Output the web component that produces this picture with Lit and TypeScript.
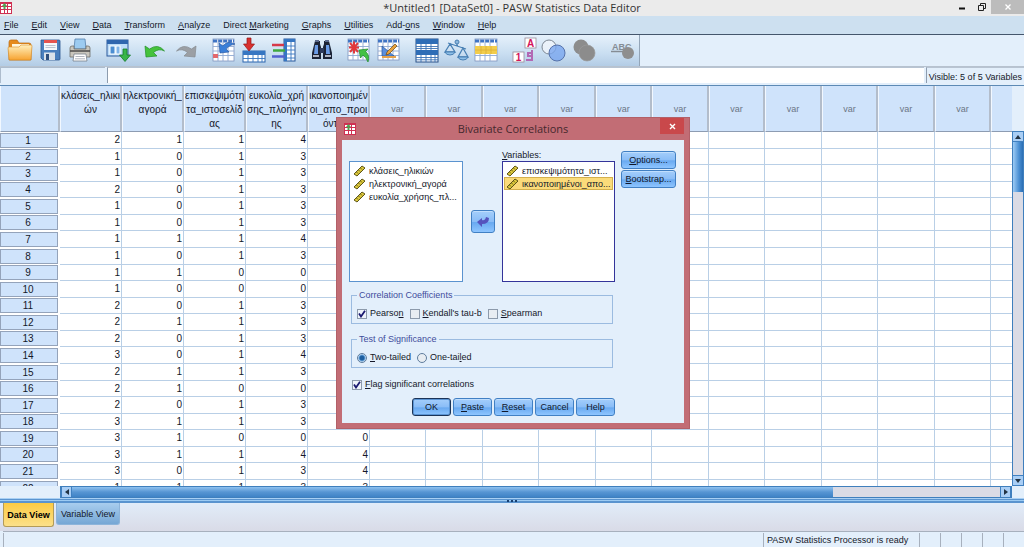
import { LitElement, html, svg, css, nothing } from "lit";
import { customElement, property } from "lit/decorators.js";
import { classMap } from "lit/directives/class-map.js";

// A label whose mnemonic letter is marked with "&".
const mnemonic = (label: string) => {
  const at = label.indexOf("&");
  return at < 0
    ? html`${label}`
    : html`${label.slice(0, at)}<u>${label[at + 1]}</u>${label.slice(at + 2)}`;
};

const MENUS = ["&File", "&Edit", "&View", "&Data", "&Transform", "&Analyze", "Direct &Marketing",
  "&Graphs", "&Utilities", "Add-&ons", "&Window", "&Help"];

const VARIABLES = [
  ["κλάσεις_ηλικι", "ών"],
  ["ηλεκτρονική_", "αγορά"],
  ["επισκεψιμότη", "τα_ιστοσελίδ", "ας"],
  ["ευκολία_χρή", "σης_πλοήγησ", "ης"],
  ["ικανοποιημέν", "οι_απο_προι", "όντα_υ"],
];

const ROWS = [
  "2114", "1013", "1013", "2013", "1013", "1013", "1114", "1013", "1100", "1000", "2013",
  "2113", "2013", "3014", "2113", "2100", "2013", "3113", "31000", "31144", "30134", "11133",
];
const EMPTY_COLUMNS = Array.from({ length: 11 });

const grid = (x: number, y: number, w: number, h: number, head = "#3f74c4") => svg`
  <rect x=${x} y=${y} width=${w} height=${h} fill="#fff" stroke="#7f95bd" stroke-width=".8"/>
  <path d="M${x} ${y + 2}h${w}" stroke=${head} stroke-width="3" stroke-dasharray="4 1"/>
  <path d="M${x} ${y + 7.5}h${w}M${x} ${y + 12}h${w}M${x} ${y + 16.5}h${w}M${x + 5} ${y}v${h}M${x + 10} ${y}v${h}M${x + 15} ${y}v${h}" stroke="#8fa9d3" stroke-width=".9"/>`;

const ICONS: Record<string, unknown> = {
  open: svg`
    <path d="M4 25V7q0-2 2-2h6l2 3h10q2 0 2 2v15z" fill="#e58a1d" stroke="#b96a12" stroke-width=".7"/>
    <path d="M7 9h17v5H7z" fill="#fff6dd"/>
    <path d="M3 13q0-1 1-1h10l2-2h10q1 0 1 1l-1 13q0 1-1 1H5q-1 0-1-1z" fill="url(#gold)" stroke="#d78a22" stroke-width=".6"/>`,
  save: svg`
    <path d="M6 5h18q1 0 1 1v18q0 1-1 1H8l-2-2z" fill="#4a7fbd" stroke="#2c568f" stroke-width=".8"/>
    <path d="M9 5h13v10H9z" fill="#f4f6fa"/><path d="M9 5h13v3H9z" fill="#e5534f"/>
    <path d="M10.500 10.500h10M10.500 12.500h10" stroke="#aab5c5" stroke-width=".8"/>
    <path d="M9 17.500h11V25H9z" fill="#dbe2ea"/><path d="M11 19h3v6h-3z" fill="#2f4f7d"/>`,
  print: svg`
    <path d="M10 4h10l1 10H9z" fill="#9ccbf0" stroke="#5580ad" stroke-width=".8"/>
    <path d="M5 13q0-2 2-2h2v3h12v-3h2q2 0 2 2v9H5z" fill="#c9c6bd" stroke="#6e6e6a" stroke-width=".8"/>
    <path d="M5 16h20" stroke="#4b4b4b" stroke-width="1.500"/>
    <path d="M9 19h12l1 7H8z" fill="#fff" stroke="#77808c" stroke-width=".8"/>
    <path d="M10.500 21.500h9M10 23.800h10" stroke="#9aa2ad" stroke-width=".8"/>`,
  recall: svg`
    <rect x="4" y="5" width="21" height="16" fill="#bcdcf8" stroke="#2d5a9c"/>
    <path d="M4 5h21v4H4z" fill="#2f66ae"/>
    <rect x="7" y="11" width="5" height="8" fill="#4b8ed2" stroke="#fff"/>
    <rect x="13" y="11" width="4" height="8" fill="#7fb4e8" stroke="#fff"/>
    <path d="M20 14h4v6h3.500L22 26.500 16.500 20H20z" fill="#39b54a" stroke="#14792a" stroke-width=".8"/>`,
  undo: svg`<path d="M4 11l1 11 11-1-3.500-3.500q5-4.500 11-1.500Q17 8 8.500 14z" fill="#45c23c" stroke="#1f8f24" stroke-width=".7"/>`,
  redo: svg`<path d="M25 11l-1 11-11-1 3.500-3.500q-5-4.500-11-1.500Q12 8 20.500 14z" fill="#9b9fa4" stroke="#85898e" stroke-width=".7"/>`,
  gotoCase: svg`${grid(4, 4, 21, 22)}
    <path d="M4 19h5v4H4z" fill="#e2686c"/>
    <path d="M10 8l1 10 9-1-3-3q3-4 9-5-8-4-12 2z" fill="#3a7fd8" stroke="#1d4e9a" stroke-width=".6"/>`,
  gotoVariable: svg`
    <rect x="4" y="16" width="22" height="11" fill="#fff" stroke="#2a64ae"/>
    <path d="M4 16h22v4H4z" fill="#3676c2"/>
    <path d="M4 23.500h22M9 20v7M14 20v7M19 20v7M23 20v7" stroke="#3676c2" stroke-width=".9"/>
    <path d="M8 3h4v6h3.500l-5.500 7-5.500-7H8z" fill="#d8312f" stroke="#941918" stroke-width=".7"/>`,
  variables: svg`
    <rect x="15" y="4" width="11" height="22" fill="#fff" stroke="#28599c"/>
    <path d="M15 4h3v22h-3zM15 4h11v3H15z" fill="#3676c2"/>
    <path d="M18 11h8M18 15h8M18 19h8M18 23h8M22 7v19" stroke="#3676c2" stroke-width=".9"/>
    <path d="M3 10h12" stroke="#d63a4a" stroke-width="2.500"/><path d="M4 15.500h12" stroke="#3fa83f" stroke-width="2.500"/>
    <path d="M3 21.500h13" stroke="#5361cf" stroke-width="2.500"/>`,
  find: svg`
    <path d="M8 6h5v3l1 3v12H5v-6l2-8zM17 6h5l1 4 2 8v6h-9V12l1-3z" fill="#1b2336"/>
    <path d="M8 5h4v2H8zM18 5h4v2h-4z" fill="#5b6a8c"/><path d="M8 10h3v9H7zM19 10h3l1 9h-4z" fill="#6a9be6"/>
    <path d="M13 13h4v5h-4z" fill="#2c3a5c"/><path d="M6 21h6M18 21h6" stroke="#dfe5f2" stroke-width="1.500"/>`,
  insertCase: svg`${grid(3, 4, 21, 21)}
    <path d="M5 8l8 9M13 8l-8 9M9 6.500v12M4 12.500h10" stroke="#e0383c" stroke-width="2"/>
    <path d="M14 15l9-1-2.500 2.500Q25 20 23 27q-2-5-5-7l-2.500 3z" fill="#43c144" stroke="#1e8a2a" stroke-width=".7"/>`,
  insertVariable: svg`${grid(3, 4, 21, 21)}
    <path d="M7 11v10h12z" fill="#5b8fdc" stroke="#26549c" stroke-width=".7"/>
    <path d="M20 9l2 2-8 8-3 1 1-3z" fill="#e9a23c" stroke="#6d4813" stroke-width=".7"/><path d="M7 21h14v2H7z" fill="#e5a14b"/>`,
  split: svg`
    <rect x="3" y="4" width="22" height="23" fill="#fff" stroke="#274f86"/>
    <path d="M3 4h22v5H3zM3 15h22v5H3z" fill="#2e6db6"/>
    <path d="M3 11.500h22M3 13.500h22M3 22.500h22M3 24.800h22M8 9v6M13 9v6M18 9v6M8 20v7M13 20v7M18 20v7M22 20v7" stroke="#3b73b5" stroke-width=".9"/>`,
  weight: svg`<g fill="none" stroke="#4980b4" stroke-width="1.300">
    <path d="M5 8l18 6M14 5v6M7 9l-5 8h10zM20 13l-5 9h10z"/></g>
    <circle cx="14" cy="7" r="2" fill="#8bb7dd" stroke="#4980b4"/>
    <path d="M2 17h10q-1 3-5 3t-5-3zM15 22h10q-1 3-5 3t-5-3z" fill="#8fc0e8" stroke="#4980b4"/>`,
  select: svg`${grid(2, 4, 22, 22)}<path d="M2 11h22v8H2z" fill="#f2cd4c"/>
    <path d="M2 15h22M8 11v8M13 11v8M18 11v8" stroke="#dcae35" stroke-width=".8"/>`,
  valueLabels: svg`
    <rect x="14" y="3" width="11" height="10" fill="#fff" stroke="#9a8c9a" stroke-width=".8"/>
    <rect x="2" y="17" width="11" height="10" fill="#fff" stroke="#9a8c9a" stroke-width=".8"/>
    <text x="19.500" y="11.500" text-anchor="middle" font-size="10" font-weight="700" fill="#d3145a">A</text>
    <text x="7.500" y="25.500" text-anchor="middle" font-size="10" font-weight="700" fill="#d3145a">1</text>
    <path d="M21 15v11M22 18h-5v3h4M15 25h7" fill="none" stroke="#b268b4" stroke-width="2"/>`,
  sets: svg`<circle cx="8" cy="12" r="7" fill="#f0f5fb" fill-opacity=".8" stroke="#7e8894"/>
    <circle cx="16" cy="18" r="8" fill="#79a6ef" fill-opacity=".8" stroke="#5672ab"/>`,
  allVariables: svg`<circle cx="10" cy="12" r="7.500" fill="#8c8c8c"/><circle cx="16" cy="18" r="8" fill="#8c8c8c" stroke="#9b9b9b" stroke-width=".7"/>`,
  spelling: svg`
    <text x="3" y="14.500" font-size="9" font-weight="700" fill="#858c94">ABC</text>
    <path d="M2 16.500h17" stroke="#858c94" stroke-width="1.500"/><circle cx="19" cy="18" r="6" fill="#8e8e8e"/>`,
};

const TOOL_GROUPS: [string, string][][] = [
  [["open", "Open"], ["save", "Save"], ["print", "Print"]],
  [["recall", "Recall dialogs"]],
  [["undo", "Undo"], ["redo", "Redo"]],
  [["gotoCase", "Go to case"], ["gotoVariable", "Go to variable"], ["variables", "Variables"]],
  [["find", "Find"]],
  [["insertCase", "Insert case"], ["insertVariable", "Insert variable"]],
  [["split", "Split file"], ["weight", "Weight cases"], ["select", "Select cases"]],
  [["valueLabels", "Value labels"], ["sets", "Use sets"], ["allVariables", "Show all"]],
  [["spelling", "Spell check"]],
];

const appIcon = html`<svg class="app-icon" viewBox="0 0 12 12" aria-hidden="true">
  <rect width="12" height="12" fill="#cf3052"/>
  <path d="M1 2h3v2H1zM5 2h2v2H5zM8 2h3v2H8zM1 5h3v2H1zM5 5h2v2H5zM8 5h3v2H8zM1 8h3v3H1zM5 8h2v3H5zM8 8h3v3H8z" fill="#fff"/>
  <path d="M4.500 1l2.500 3H5.500v3h-2V4H2z" fill="#4fa352"/></svg>`;

const base = css`
  * { box-sizing: border-box; }
  button, input, fieldset, legend { font: inherit; color: inherit; margin: 0; padding: 0; border: 0; background: none; }
  u { text-decoration: underline; text-underline-offset: 1px; }
  svg { display: block; }
  .app-icon { width: 12px; height: 12px; flex: none; }
`;

@customElement("scale-list")
export class ScaleList extends LitElement {
  @property({ attribute: false }) items: string[] = [];
  @property({ type: Number }) selected = -1;

  static styles = [base, css`
    :host { display: block; background: #fff; border: 1px solid #5b93cf; padding: 2px 1px; overflow: hidden; }
    :host([active]) { border-color: #34349a; }
    ul { list-style: none; margin: 0; padding: 0; }
    li { display: flex; align-items: center; gap: 3px; height: 13px; padding-left: 1px; border: 1px solid transparent; white-space: nowrap; }
    li.selected { background: #fbdb7a; border-color: #d3b04e; }
    svg { width: 13px; height: 12px; flex: none; }
  `];

  render() {
    return html`<ul>${this.items.map((item, i) => html`
      <li class=${classMap({ selected: i === this.selected })}>
        <svg viewBox="0 0 13 12" aria-hidden="true">
          <path d="M1 9l8-8 3 2-8 8z" fill="#ddc93c" stroke="#5e5618" stroke-width="1"/>
          <path d="M3.500 7l1.500 1.500M5.500 5l1.500 1.500M7.500 3L9 4.500" stroke="#5e5618" stroke-width=".9"/>
        </svg><span>${item}</span>
      </li>`)}</ul>`;
  }
}

@customElement("correlations-dialog")
export class CorrelationsDialog extends LitElement {
  static styles = [base, css`
    :host { display: block; background: #c26d75; border: 1px solid #b26068; padding: 0 5px 5px; }
    header { display: grid; grid-template-columns: 28px 1fr 28px; align-items: center; height: 22px; font: 11px/22px "Open Sans", sans-serif; color: #45282d; text-align: center; }
    header .app-icon { margin-left: 2px; }
    h2 { font: inherit; margin: 0; }
    .close { align-self: start; justify-self: end; width: 24px; height: 16px; background: #c9484b; color: #fff; display: grid; place-items: center; }
    .close svg { width: 7px; height: 7px; }
    .panel { display: grid; grid-template-columns: 266px 55px; gap: 6px; padding: 9px 7px 7px; background: #e3effb; }
    .picker { display: grid; grid-template-columns: 114px 1fr 113px; grid-template-rows: 12px 121px; }
    .picker label { grid-column: 3; line-height: 12px; }
    .picker scale-list { grid-row: 2; }
    .move { grid-row: 2; place-self: center; width: 24px; height: 23px; display: grid; place-items: center; }
    .move svg { width: 12px; height: 10px; }
    .side { display: flex; flex-direction: column; gap: 1px; padding-top: 2px; }
    .push { border: 1px solid #4180c4; border-radius: 3px; background: linear-gradient(#a4cefb, #8abdf7 50%, #69a9f0 55%, #8ec5ff); box-shadow: inset 0 1px #c0defd; color: #10182c; }
    .side .push { height: 18px; }
    fieldset { display: flex; align-items: center; gap: 6px; border: 1px solid #9bbbe0; margin-left: 2px; margin-right: 2px; padding: 6px 5px 3px; min-width: 0; }
    legend { padding: 0 2px; line-height: 12px; color: #3f4c9c; }
    .coefficients { margin-top: 7px; }
    .tails { margin-top: 9px; }
    .choice { display: flex; align-items: center; gap: 3px; line-height: 13px; height: 13px; white-space: nowrap; }
    .flag { margin: 10px 0 0 3px; }
    input { appearance: none; flex: none; width: 10px; height: 10px; border: 1px solid #8c9aab; background-color: #e8edf2; }
    input[type="checkbox"]:checked { background: #eef3fa url('data:image/svg+xml,<svg xmlns="http://www.w3.org/2000/svg" viewBox="0 0 8 8"><path d="M1 3.500l2 3L7 .8" fill="none" stroke="%23191970" stroke-width="1.800"/></svg>') center / 8px 8px no-repeat; }
    input[type="radio"] { border-radius: 50%; border-color: #5f7d9d; }
    input[type="radio"]:checked { background: radial-gradient(#1f5f9f 0 2px, #6aa5dc 3px, #d7e8f8 4px); }
    footer { display: flex; justify-content: flex-end; gap: 2px; margin-top: 7px; }
    footer .push { width: 39px; height: 18px; }
    footer .default { border: 1px solid #1b3458; box-shadow: inset 0 0 0 1px #5a94d4; }
  `];

  render() {
    return html`
      <header>
        ${appIcon}
        <h2>Bivariate Correlations</h2>
        <button class="close" aria-label="Close">
          <svg viewBox="0 0 7 7"><path d="M1 1l5 5M6 1L1 6" stroke="#fff" stroke-width="1.400"/></svg>
        </button>
      </header>
      <div class="panel">
        <form @submit=${(e: Event) => e.preventDefault()}>
          <div class="picker">
            <label id="variables-label">${mnemonic("&Variables:")}</label>
            <scale-list .items=${["κλάσεις_ηλικιών", "ηλεκτρονική_αγορά", "ευκολία_χρήσης_πλ..."]}></scale-list>
            <button type="button" class="push move" aria-label="Move variable">
              <svg viewBox="0 0 12 10"><path d="M0 5l5-4v2q3 1 4-3l3 1q0 6-7 6v3z" fill="#5552bd"/></svg>
            </button>
            <scale-list active aria-labelledby="variables-label" .selected=${1}
              .items=${["επισκεψιμότητα_ιστ...", "ικανοποιημένοι_απο..."]}></scale-list>
          </div>
          <fieldset class="coefficients">
            <legend>Correlation Coefficients</legend>
            <label class="choice"><input type="checkbox" checked /><span>${mnemonic("Pearso&n")}</span></label>
            <label class="choice"><input type="checkbox" /><span>${mnemonic("&Kendall's tau-b")}</span></label>
            <label class="choice"><input type="checkbox" /><span>${mnemonic("&Spearman")}</span></label>
          </fieldset>
          <fieldset class="tails">
            <legend>Test of Significance</legend>
            <label class="choice"><input type="radio" name="tails" checked /><span>${mnemonic("&Two-tailed")}</span></label>
            <label class="choice"><input type="radio" name="tails" /><span>${mnemonic("One-tai&led")}</span></label>
          </fieldset>
          <label class="choice flag"><input type="checkbox" checked /><span>${mnemonic("&Flag significant correlations")}</span></label>
          <footer>
            ${["OK", "&Paste", "&Reset", "Cancel", "Help"].map((label, i) => html`
              <button type="button" class=${classMap({ push: true, default: i === 0 })}>${mnemonic(label)}</button>`)}
          </footer>
        </form>
        <div class="side">
          <button class="push">${mnemonic("&Options...")}</button>
          <button class="push">${mnemonic("&Bootstrap...")}</button>
        </div>
      </div>`;
  }
}

@customElement("app-root")
export class AppRoot extends LitElement {
  static styles = [base, css`
    :host { display: flex; flex-direction: column; height: 100vh; position: relative; overflow: hidden; background: #e3effb; color: #14182a; font: 9px/12px "Liberation Sans", Arial, sans-serif; }
    .title { display: grid; grid-template-columns: 72px 1fr 72px; align-items: center; height: 16px; flex: none; background: #ebebeb; font: 11px/16px "Open Sans", sans-serif; color: #333; text-align: center; }
    .title h1 { font: inherit; margin: 0; }
    .window-buttons { display: flex; align-items: flex-start; justify-content: flex-end; height: 16px; }
    .window-buttons button { width: 20px; height: 14px; display: grid; place-items: center; }
    .window-buttons .close { width: 33px; background: #bcbcbc; }
    .window-buttons svg { width: 8px; height: 8px; }
    .menu { display: flex; gap: 13px; align-items: center; height: 19px; flex: none; padding-left: 4px; background: #cde0f0; border-bottom: 1px solid #45566c; }
    .menu button { white-space: nowrap; }
    .tools { display: flex; height: 32px; flex: none; border-bottom: 1px solid #b7c2cf; }
    .strip { display: flex; gap: 8px; padding: 0 0 0 5px; border-right: 1px solid #93a5b8; background: linear-gradient(#e6f1fb, #c9def1 60%, #b3cce5); }
    .group { display: flex; }
    .group button, .group svg { width: 30px; height: 30px; }
    .group text { font-family: "Liberation Sans", sans-serif; }
    .entry { display: flex; gap: 2px; height: 19px; flex: none; padding-bottom: 2px; border-bottom: 1px solid #5d8ab5; }
    .entry .cell { width: 105px; border: 1px solid #adbccd; border-right: 0; border-bottom: 0; }
    .entry input { flex: 1; min-width: 0; background: #fff; border-left: 1px solid #8d9cae; border-top: 1px solid #b8c4d2; }
    .visible { padding: 3px 2px 0 2px; border-left: 1px solid #8d9cae; border-top: 1px solid #b8c4d2; white-space: nowrap; }
    .sheet { flex: 1; min-height: 0; display: grid; grid-template-columns: minmax(0, 1fr) 12px; grid-template-rows: minmax(0, 1fr) 12px; }
    .cells { overflow: hidden; background: #fff; }
    table { border-collapse: separate; border-spacing: 0; table-layout: fixed; width: max(100%, 1024px); font-size: 10px; }
    .c-row { width: 60px; }
    .c-data { width: 62px; }
    .c-empty { width: 57px; }
    .c-empty:nth-child(odd) { width: 56px; }
    th, td { padding: 0; font-weight: 400; overflow: hidden; white-space: nowrap; }
    thead th { height: 45px; line-height: 14px; vertical-align: top; padding-top: 3px; background: #cfe3fb; border-right: 2px solid #b3bdcb; border-left: 1px solid #f2f8ff; border-bottom: 1px solid #8d9cb2; }
    thead .none { color: #6b7686; padding: 0; vertical-align: middle; font-size: 9px; }
    tbody tr { height: 17px; }
    tbody tr:nth-child(7n + 2), tbody tr:nth-child(7n + 4), tbody tr:nth-child(7n + 6) { height: 16px; }
    td { text-align: right; padding-right: 1px; line-height: 14px; border-right: 1px solid #b9cfe6; border-bottom: 1px solid #b9cfe6; }
    tbody th { padding: 0 2px 1px 0; line-height: 14px; }
    tbody th span { display: block; line-height: 13px; padding-right: 2px; background: #cfe3fb; border: 1px solid #94a3ba; }
    .vbar { display: flex; flex-direction: column; padding-top: 45px; }
    .vtrack { flex: 1; display: flex; flex-direction: column; border: 1px solid #3f7fbd; border-bottom: 0; background: #dadbe5; }
    .vthumb { height: 50px; background: linear-gradient(90deg, #9ccbf5, #4a8fd3 60%, #2b6fb5); }
    .arrow { width: 12px; height: 11px; flex: none; display: grid; place-items: center; background: #a9cef5; border: 1px solid #4080c0; }
    .arrow svg { width: 6px; height: 6px; }
    .vtrack .arrow { width: 10px; height: 10px; border-width: 0 0 1px; }
    .hbar { display: flex; margin-left: 60px; border: 1px solid #3f7fbd; background: #dadbe5; }
    .hbar .arrow { width: 11px; height: 10px; border-width: 0 1px; }
    .htrack { flex: 1; }
    .hthumb { width: 82%; height: 100%; background: linear-gradient(#8fc2f0, #5795d3 50%, #3f83c6); }
    .splitter { height: 5px; flex: none; display: flex; justify-content: center; align-items: center; gap: 2px; background: linear-gradient(#a9d0f4 0 1px, #5a94cf 1px 2px, #9ccbf3 2px 3px, #5a94cf 3px); }
    .splitter i { width: 2px; height: 2px; background: #173f70; }
    .tabs { display: flex; align-items: flex-start; gap: 2px; height: 28px; flex: none; padding-left: 3px; background: linear-gradient(#e1ecf9, #d9dbe7); }
    .tabs button { width: 64px; height: 22px; background: linear-gradient(#a8cdee, #76a7d5); border: 1px solid #8db4da; border-top: 0; border-radius: 0 0 3px 3px; white-space: nowrap; }
    .tabs .current { width: 51px; height: 24px; font-weight: 700; background: linear-gradient(#fccb43, #fbe08a); border-color: #b39b58; color: #000; }
    .status { display: flex; height: 16px; flex: none; margin-left: 3px; border-top: 1px solid #a7b0bd; }
    .status span { width: 21px; margin-top: 1px; border-left: 1px solid #a7b0bd; line-height: 14px; white-space: nowrap; }
    .status .blank { flex: 1; }
    .status .message { width: 156px; padding-left: 3px; }
    correlations-dialog { position: absolute; left: 336px; top: 117px; width: 354px; }
  `];

  render() {
    return html`
      <div class="title">
        ${appIcon}
        <h1>*Untitled1 [DataSet0] - PASW Statistics Data Editor</h1>
        <div class="window-buttons">
          <button aria-label="Minimize"><svg viewBox="0 0 8 8"><path d="M1 5.500h6" stroke="#111" stroke-width="2"/></svg></button>
          <button aria-label="Restore"><svg viewBox="0 0 8 8"><path d="M.5 2.500h5v5h-5zM2.500 2V.5h5v5H6" fill="none" stroke="#222"/></svg></button>
          <button class="close" aria-label="Close"><svg viewBox="0 0 8 8"><path d="M1.500 1.500l5 5M6.500 1.500l-5 5" stroke="#fff" stroke-width="1.300"/></svg></button>
        </div>
      </div>
      <nav class="menu">${MENUS.map((m) => html`<button>${mnemonic(m)}</button>`)}</nav>
      <div class="tools">
        <div class="strip">
          ${TOOL_GROUPS.map((group) => html`<div class="group">${group.map(([id, label]) => html`
            <button aria-label=${label}><svg viewBox="0 0 30 30">
              ${id === "open" ? svg`<defs><linearGradient id="gold" x2="0" y2="1"><stop stop-color="#fff0bd"/><stop offset="1" stop-color="#f7a331"/></linearGradient></defs>` : nothing}
              ${ICONS[id]}</svg></button>`)}</div>`)}
        </div>
      </div>
      <div class="entry">
        <div class="cell"></div>
        <input type="text" aria-label="Cell value" />
        <div class="visible">Visible: 5 of 5 Variables</div>
      </div>
      <div class="sheet">
        <div class="cells">
          <table>
            <colgroup>
              <col class="c-row" />
              ${VARIABLES.map(() => html`<col class="c-data" />`)}
              ${EMPTY_COLUMNS.map(() => html`<col class="c-empty" />`)}
              <col />
            </colgroup>
            <thead>
              <tr>
                <th></th>
                ${VARIABLES.map((lines) => html`<th scope="col">${lines.map((l, i) => html`${i ? html`<br />` : nothing}${l}`)}</th>`)}
                ${EMPTY_COLUMNS.map(() => html`<th scope="col" class="none">var</th>`)}
                <th></th>
              </tr>
            </thead>
            <tbody>
              ${ROWS.map((row, i) => html`<tr>
                <th scope="row"><span>${i + 1}</span></th>
                ${VARIABLES.map((_, c) => html`<td>${row[c] ?? nothing}</td>`)}
                ${EMPTY_COLUMNS.map(() => html`<td></td>`)}
                <td></td>
              </tr>`)}
            </tbody>
          </table>
        </div>
        <div class="vbar">
          <div class="vtrack">
            <button class="arrow" aria-label="Scroll up"><svg viewBox="0 0 6 6"><path d="M0 5l3-4 3 4z" fill="#234"/></svg></button>
            <div class="vthumb"></div>
          </div>
          <button class="arrow" aria-label="Scroll down"><svg viewBox="0 0 6 6"><path d="M0 1h6L3 5z" fill="#234"/></svg></button>
        </div>
        <div class="hbar">
          <button class="arrow" aria-label="Scroll left"><svg viewBox="0 0 6 6"><path d="M5 0v6L1 3z" fill="#234"/></svg></button>
          <div class="htrack"><div class="hthumb"></div></div>
          <button class="arrow" aria-label="Scroll right"><svg viewBox="0 0 6 6"><path d="M1 0v6l4-3z" fill="#234"/></svg></button>
        </div>
      </div>
      <div class="splitter"><i></i><i></i><i></i></div>
      <div class="tabs">
        <button class="current">Data View</button>
        <button>Variable View</button>
      </div>
      <div class="status">
        <span class="blank"></span>
        <span class="message">PASW Statistics Processor is ready</span>
        <span></span><span></span><span></span><span></span><span></span>
      </div>
      <correlations-dialog role="dialog" aria-label="Bivariate Correlations"></correlations-dialog>`;
  }
}
